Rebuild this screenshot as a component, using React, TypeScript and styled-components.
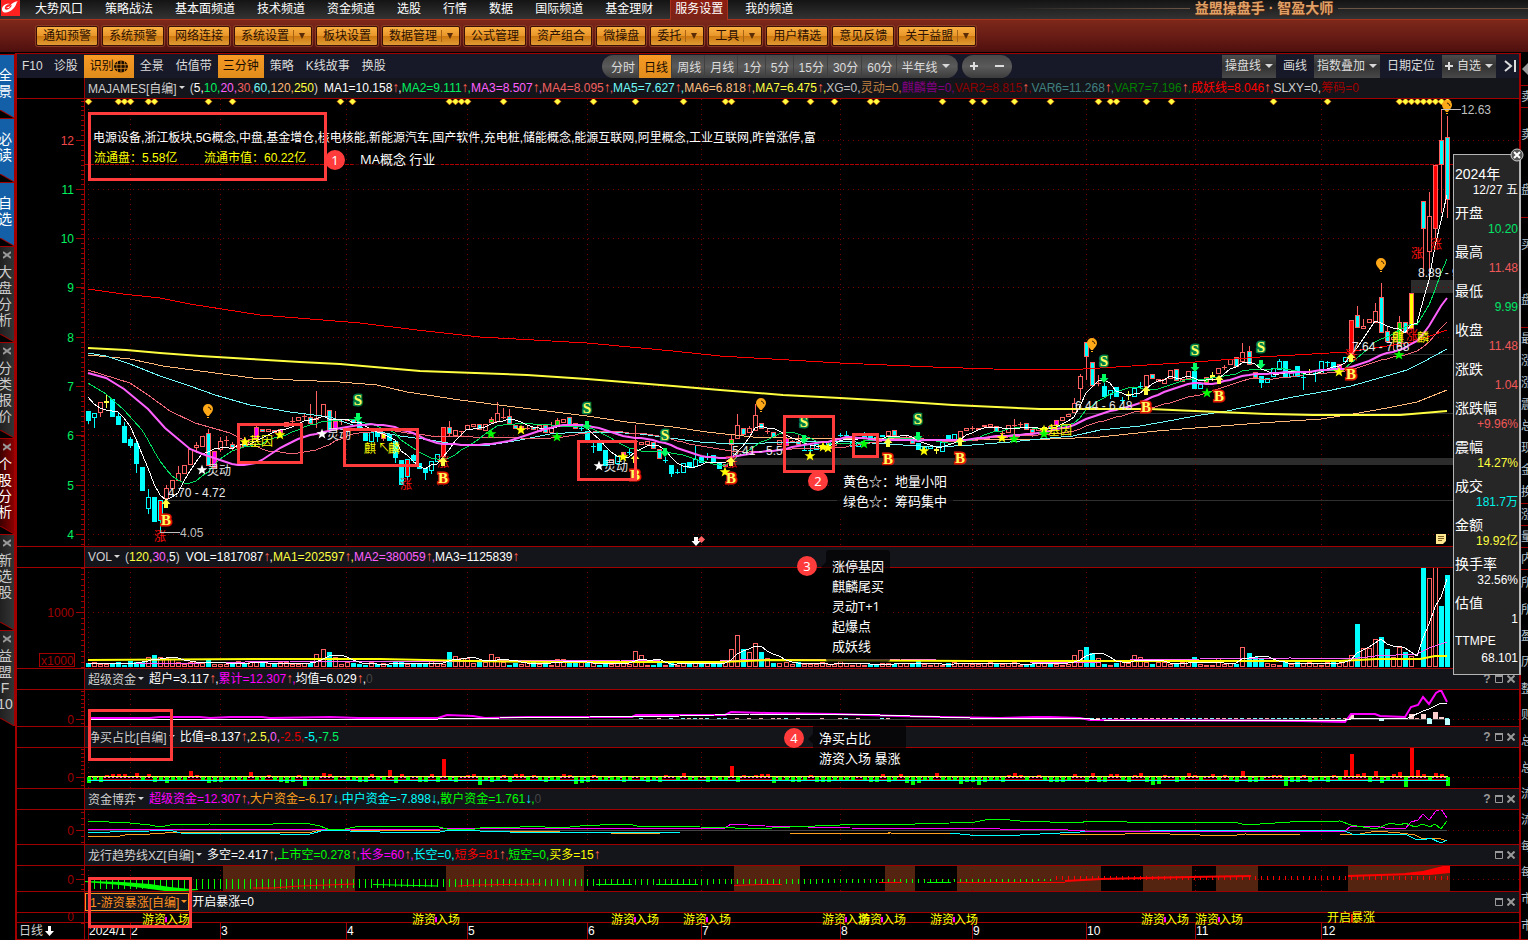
import React from "react";
import styled, { createGlobalStyle, css } from "styled-components";

const RED = "#a00000";
const FONT = '"Liberation Sans", "Noto Sans CJK SC", sans-serif';

const GlobalStyle = createGlobalStyle`
  * { box-sizing: border-box; }
  body { margin: 0; background: #000; font-family: ${FONT}; font-size: 12px; color: #fff; overflow-x: hidden; }
  button { font-family: inherit; font-size: inherit; color: inherit; background: none; border: 0; padding: 0; margin: 0; white-space: nowrap; cursor: pointer; }
`;

/* ---------- shell ---------- */

const Page = styled.div`
  position: relative;
  display: flex;
  flex-direction: column;
  min-height: 100vh;
  overflow: hidden;
`;

const NavBar = styled.nav`
  display: flex;
  height: 20px;
  align-items: stretch;
  background: linear-gradient(#141414, #333);
  border-bottom: 1px solid #a8321c;
`;

const Logo = styled.div`
  width: 24px;
  height: 16px;
`;

const NavItem = styled.a<{ $active?: boolean }>`
  padding: 0 11px;
  height: 19px;
  line-height: 18px;
  color: #fff;
  text-decoration: none;
  white-space: nowrap;
  ${(p) =>
    p.$active &&
    css`
      height: 20px;
      margin: 0 6px;
      padding: 0 4px;
      background: linear-gradient(#8c1c10, #7a2418);
      border: solid #a8321c;
      border-width: 0 1px;
    `}
`;

const BrandRow = styled.div`
  flex: 1;
  display: flex;
  align-items: center;
  margin-left: 200px;
  padding-bottom: 3px;
`;

const BrandLine = styled.span<{ $tail?: boolean }>`
  flex: ${(p) => (p.$tail ? "0 0 190px" : "1")};
  height: 1px;
  background: ${(p) => (p.$tail ? "#6b5546" : "linear-gradient(90deg, transparent, #6b5546)")};
`;

const Brand = styled.strong`
  width: 148px;
  text-align: center;
  font-size: 14px;
  line-height: 16px;
  color: #e0a066;
  text-shadow: 0 1px 1px #5a2a10;
  white-space: nowrap;
`;

const Ribbon = styled.div`
  display: flex;
  gap: 4px;
  height: 32px;
  padding: 6px 36px;
  background: linear-gradient(#7e281a, #641a14 60%, #4e0f0e);
`;

const RibbonButton = styled.button`
  display: flex;
  align-items: center;
  height: 20px;
  padding: 0 6px;
  border: 1px solid #3a1006;
  border-radius: 2px;
  background: linear-gradient(#fbb040, #e8962a 50%, #cf7a10 52%, #e09a34);
  color: #2c1002;
  box-shadow: 0 0 0 1px #8c3c24;
  line-height: 18px;
`;

const RibbonDrop = styled.span`
  display: flex;
  justify-content: flex-end;
  align-items: center;
  width: 12px;
  height: 12px;
  margin: 0 0 0 4px;
  border-left: 1px solid #a86414;
`;

const Caret = styled.span<{ $color?: string; $size?: number; $tall?: boolean }>`
  display: inline-block;
  flex: none;
  border: ${(p) => p.$size ?? 3}px solid transparent;
  border-bottom: 0;
  border-top-color: ${(p) => p.$color ?? "#d8d8d8"};
  ${(p) => p.$tall && "border-top-width: 6px;"}
`;

const Workspace = styled.div`
  flex: 1;
  display: flex;
  border-top: 1px solid #000;
`;

/* ---------- side strips ---------- */

const TabStrip = styled.aside`
  width: 15px;
  flex: none;
  padding-top: 1px;
`;

const tabColors = {
  blue: "#1460a8",
  gray: "linear-gradient(90deg, #202020, #343434)",
  red: "linear-gradient(90deg, #3c0000, #8a0000)",
};

const SideTab = styled.button<{ $tone: keyof typeof tabColors }>`
  position: relative;
  display: flex;
  flex-direction: column;
  align-items: center;
  width: 15px;
  height: ${(p) => (p.$tone === "blue" ? 64 : 96)}px;
  padding: ${(p) => (p.$tone === "blue" ? 12 : 4)}px 4px 0 0;
  overflow: hidden;
  border: solid ${RED};
  border-width: 1px 1px 0 0;
  background: ${(p) => tabColors[p.$tone]};
  color: ${(p) => (p.$tone === "gray" ? "#ccc" : "#fff")};
  font-size: 14px;
  line-height: 16px;
  &::after {
    content: "";
    position: absolute;
    left: 0;
    right: 0;
    bottom: 0;
    height: 8px;
    background: linear-gradient(to top right, #000 44%, ${RED} 50%, transparent 58%);
  }
`;

const TabClose = styled.svg`
  flex: none;
  width: 8px;
  height: 8px;
  margin: 0 0 5px 4px;
`;

const QuoteStrip = styled.aside`
  width: 9px;
  flex: none;
  display: flex;
  flex-direction: column;
  border-left: 2px solid ${RED};
  overflow: hidden;
  color: #b8c4cc;
`;

const QuoteGroup = styled.div<{ $h?: number }>`
  ${(p) => (p.$h ? `flex: none; height: ${p.$h}px;` : "flex: 1;")}
  display: flex;
  flex-direction: column;
  justify-content: space-around;
  border-bottom: 1px solid ${RED};
  line-height: 16px;
  white-space: nowrap;
`;

/* ---------- toolbar ---------- */

const Center = styled.main`
  flex: 1;
  min-width: 0;
  display: flex;
  flex-direction: column;
  border: solid ${RED};
  border-width: 1px 0 0 2px;
`;

const Toolbar = styled.div`
  display: flex;
  justify-content: space-between;
  align-items: center;
  height: 24px;
  background: #171929;
  color: #dcdcdc;
`;

const ToolGroup = styled.div<{ $gap?: number }>`
  display: flex;
  align-items: center;
  gap: ${(p) => p.$gap ?? 0}px;
  height: 23px;
`;

const ToolButton = styled.button<{ $on?: boolean; $boxed?: boolean; $pad?: number }>`
  display: flex;
  align-items: center;
  height: 23px;
  line-height: 16px;
  padding: 0 ${(p) => p.$pad ?? 6}px;
  ${(p) =>
    p.$on &&
    css`
      background: linear-gradient(#f89a24, #e08c1c);
      color: #180c00;
    `}
  ${(p) =>
    p.$boxed &&
    css`
      background: linear-gradient(#4c4c4c, #333 50%, #484848);
      padding: 0 3px;
      gap: 4px;
    `}
`;

const CollapseButton = styled(ToolButton)`
  padding: 0 2px 0 8px;
`;

const Pill = styled.div`
  display: flex;
  height: 23px;
  border-radius: 12px;
  overflow: hidden;
  background: linear-gradient(#484848, #5a5a5a 50%, #3c3c3c);
`;

const PillButton = styled.button<{ $on?: boolean; $edge?: "start" | "end" }>`
  display: flex;
  align-items: center;
  gap: 4px;
  padding: 0 ${(p) => (p.$edge === "end" ? 8 : 4)}px 0 ${(p) => (p.$edge === "start" ? 9 : 5)}px;
  box-shadow: inset -1px 0 #404040;
  ${(p) =>
    p.$on &&
    css`
      background: linear-gradient(#f89a24, #e08c1c);
      color: #180c00;
    `}
`;

const ZoomButton = styled.button`
  display: flex;
  align-items: center;
  justify-content: center;
  width: 25px;
`;

/* ---------- panels ---------- */

const PanelHead = styled.div`
  display: flex;
  align-items: center;
  height: 21px;
  margin-left: 67px;
  padding: 0 4px 2px 3px;
  border-left: 1px solid ${RED};
  background: #14151a;
  box-shadow: inset 0 -1px ${RED};
  white-space: nowrap;
  overflow: hidden;
`;

const HeadRow = styled.div`
  box-shadow: inset 0 -1px ${RED};
`;

const NameButton = styled.button<{ $hot?: boolean }>`
  display: flex;
  align-items: center;
  gap: 2px;
  height: 18px;
  margin-right: ${(p) => (p.$hot ? 3 : 5)}px;
  color: #d0d0d0;
  ${(p) =>
    p.$hot &&
    css`
      margin-left: -3px;
      padding: 0 1px 0 4px;
      border: 1px solid #ff9020;
      color: #ff9020;
    `}
`;

const Readout = styled.span<{ $c: string }>`
  color: ${(p) => p.$c};
  line-height: 18px;
`;

const Trend = styled.span<{ $up: boolean }>`
  display: inline-block;
  width: 6px;
  font-size: 14px;
  font-weight: bold;
  line-height: 14px;
  color: ${(p) => (p.$up ? "#ff6050" : "#00e8ff")};
`;

const Params = styled.span`
  margin-right: 6px;
`;

const HeadTools = styled.span`
  display: flex;
  align-items: center;
  gap: 4px;
  margin-left: auto;
  color: #999;
`;

const IconButton = styled.button`
  width: 8px;
  height: 12px;
  font-size: 12px;
  font-weight: bold;
  line-height: 12px;
  & svg { display: block; margin: 2px 0; }
`;

const Plot = styled.svg<{ $h: number; $over?: boolean }>`
  display: block;
  width: 100%;
  height: ${(p) => p.$h}px;
  border-bottom: 1px solid ${RED};
  ${(p) => p.$over && "position: relative; overflow: visible; z-index: 1;"}
  & text { font-size: 12px; }
`;

/* ---------- overlays ---------- */

const DataCard = styled.section`
  position: absolute;
  top: 154px;
  right: 7px;
  width: 68px;
  padding: 11px 1px 8px;
  border: solid #b4b4b4;
  border-width: 1px 2px 1px 1px;
  background: #262626;
  & dl { margin: 0; }
  & div:last-child dd { margin: 0; }
`;

const CardLabel = styled.dt<{ $latin: boolean }>`
  height: 16px;
  font-size: ${(p) => (p.$latin ? 12 : 14)}px;
  line-height: ${(p) => (p.$latin ? 14 : 16)}px;
  white-space: nowrap;
`;

const CardValue = styled.dd<{ $c: string }>`
  height: 16px;
  margin: 0 0 7px;
  line-height: 16px;
  text-align: right;
  white-space: nowrap;
  color: ${(p) => p.$c};
`;

const CardClose = styled.button`
  position: absolute;
  top: -7px;
  right: -5px;
  width: 14px;
  height: 14px;
  & svg { display: block; }
`;

const Frame = styled.div<{ $x: number; $y: number; $w: number; $h: number }>`
  position: absolute;
  z-index: 2;
  left: ${(p) => p.$x}px;
  top: ${(p) => p.$y}px;
  width: ${(p) => p.$w}px;
  height: ${(p) => p.$h}px;
  border: 3px solid #ff3b3b;
  pointer-events: none;
`;

const Badge = styled.div<{ $x: number; $y: number }>`
  position: absolute;
  z-index: 2;
  left: ${(p) => p.$x}px;
  top: ${(p) => p.$y}px;
  width: 20px;
  height: 20px;
  border-radius: 50%;
  background: #ff3b3b;
  font: 13px/20px "Noto Sans", sans-serif;
  text-align: center;
`;

const Note = styled.div<{ $x: number; $y: number }>`
  position: absolute;
  z-index: 2;
  left: ${(p) => p.$x}px;
  top: ${(p) => p.$y}px;
  padding: 6px;
  border-radius: 3px;
  background: rgba(0, 0, 0, 0.65);
  font: 13px/20px "Open Sans", "Noto Sans CJK SC", sans-serif;
  white-space: pre;
  &::before {
    content: "";
    position: absolute;
    left: -5px;
    top: 12px;
    border: 5px solid transparent;
    border-left: 0;
    border-right-color: rgba(0, 0, 0, 0.65);
  }
`;

/* ---------- data ---------- */

const navItems = "大势风口 策略战法 基本面频道 技术频道 资金频道 选股 行情 数据 国际频道 基金理财 服务设置 我的频道".split(" ");
const ribbon = "通知预警 系统预警 网络连接 系统设置▾ 板块设置 数据管理▾ 公式管理 资产组合 微操盘 委托▾ 工具▾ 用户精选 意见反馈 关于益盟▾".split(" ");
const periods = "分时 日线 周线 月线 1分 5分 15分 30分 60分 半年线".split(" ");

const sideTabs: { tone: keyof typeof tabColors; chars: string[] }[] = [
  { tone: "blue", chars: ["全", "景"] },
  { tone: "blue", chars: ["必", "读"] },
  { tone: "blue", chars: ["自", "选"] },
  { tone: "gray", chars: ["大", "盘", "分", "析"] },
  { tone: "gray", chars: ["分", "类", "报", "价"] },
  { tone: "red", chars: ["个", "股", "分", "析"] },
  { tone: "gray", chars: ["新", "选", "股"] },
  { tone: "gray", chars: ["益", "盟", "F", "10"] },
];

const quoteGroups: { h?: number; text: string }[] = [
  { h: 22, text: "卖" },
  { h: 110, text: "卖盘" },
  { h: 110, text: "买盘" },
  { h: 176, text: "最涨涨震总现金换" },
  { h: 22, text: "涨" },
  { h: 22, text: "量" },
  { h: 22, text: "内" },
  { text: "所所盈历整则总总流流每每市市" },
];

// One entry per session: kind, body top, body bottom, optional high and low.
// u rise, d/c fall, h soft rise, R limit-up, m/g/y tagged, x/X doji
const sessions = `d411,421,411,424 h413,418,413,428 u402,413,402,417 y401,403,395,408 d399,417 d416,425,413 d426,443,422 d439,446,437,448 d443,464,442,473 d467,491 h497,509,489,514 d497,522 r500,521,500,532 u488,499,485 u480,489 u473,481,466 u465,474 u449,465 u445,448,442,453 u436,447
c433,466,429 m451,468 u441,450,437,452 x440,441,436,446 c444,448,442,450 u445,448 c441,447,437 u439,445 m427,439,426 c429,432 u429,432 c430,433 m429,433 u422,427 x421,422,417,426 u417,421 x416,417,413,421 c417,424,404 x418,420,391,428 u404,417
c410,431 m421,430,411 x421,422,419,425 u419,421 c419,423 d421,428 d432,441 h432,442 d431,437,431,442 Y433,439,433,441 d434,441 d441,458,441,463 d460,485 r459,477,459,480 d455,461,454,463 d463,469 d468,473,468,480 h461,471,461,474 h454,462 R427,457
c427,434,421,436 u430,436 x431,432,431,436 u425,430 u424,427 c424,430 u424,431 g419,423,417 u413,422,402 x417,418,408,419 c416,424,409 c425,429 m426,429 x428,429,426,430 c427,430 u425,432 c425,433 u427,433,422 g420,427,418 u419,423
c417,425 c423,429 X428,429,427,431 d431,440 X446,447,443,453 d443,451 d450,466 u459,463 h456,464 m452,455 X452,453,449,455 x441,442,425,477 u442,445 u441,445 c442,449 c449,459 X460,461,457,463 d465,474,465,477 X472,473,469,474 h463,473
d462,468 h459,467,446 d457,463 X457,458,453,460 d455,463 d463,469 m464,467 g439,445,435,460 u425,439,414 c428,435 u428,433,426 u415,431,404 c423,429 x431,432,428,434 c432,438 u440,445 m438,446 x441,442,440,443 c441,445,435 X450,451,438,451
X450,451,446,454 h444,450 y445,448 h441,445 u440,446 X435,436,433,437 X435,436,431,439 h442,447 h443,447 h436,439,432 d436,440 d437,440 h435,437 u431,436 c430,436 u437,439 x437,438,436,441 c437,444 d443,450 h447,451
h446,449 y449,451,447,454 h442,452 d435,442 h434,442 u431,440 u428,431 x428,429,426,431 u428,430 u425,427 u424,427 c426,432 x433,434,431,436 u425,433 x425,426,419,436 x424,425,422,427 c423,430 c429,433,429,437 u428,431 y427,433
c426,429 m420,426 u417,421 u414,417 u403,413,398 u376,389,374,400 c342,357,342,380 c362,386 x383,384,375,386 d386,397,383 h390,395,390,399 d387,397 X400,401,397,404 y394,396,391,400 h388,397 X386,387,382,389 u375,387 c374,379 u379,382 u379,384
u370,379 c369,381 u379,382 u371,379 d371,389 h384,389 g377,383 y375,378,372,381 u368,374 x367,368,365,370 u359,365 c357,367 u352,362,343 c351,365,346 c372,378 d376,383,376,388 h378,383 h368,377 h361,370,359 d361,377
h371,377 d366,377 X377,378,375,390 y371,373,369,374 X373,374,370,382 h361,374 X362,363,361,367 d362,370 m364,370 h357,362 R320,354 c315,328,306 u326,329,319 u319,323 u311,323,303 c297,333,283 c331,342,327 u337,340,335,350 g322,347,316 c322,333 Y293,329 n329,329
c201,229,201,277 u216,252,192,279 R165,229,165,238 c140,165,109,213 c137,200,116,218`
  .split(/\s+/)
  .map((s, i) => {
    const [top, bottom, high, low] = s.slice(1).split(",").map(Number);
    const kind = s[0];
    return {
      kind,
      top,
      bottom,
      high: high || top,
      low: low || bottom,
      close: "dc".includes(kind) ? bottom : top,
      x: Math.round(88 + i * 6.013),
    };
  });

const volumePeaks: Record<number, number> = {
  10: 10, 11: 12, 12: 10, 13: 9, 14: 8, 20: 8, 38: 13, 39: 18, 40: 15, 41: 10, 60: 15, 61: 11, 62: 9, 63: 9, 67: 13, 68: 10, 78: 8, 79: 8,
  91: 16, 92: 12, 107: 18, 108: 32, 109: 18, 110: 15, 111: 24, 112: 15, 113: 9, 164: 12, 165: 17, 166: 20, 167: 14, 168: 9, 174: 12, 175: 10,
  184: 10, 188: 9, 192: 20, 193: 14, 194: 10, 195: 9, 209: 6, 210: 12, 211: 43, 212: 19, 213: 19, 214: 28, 215: 30, 216: 18, 217: 10, 218: 20,
  219: 15, 220: 11, 221: 0, 222: 100, 223: 89, 224: 100, 225: 61, 226: 92,
};
const noise = (i: number) => Math.abs(Math.sin(i * 12.9898 + 4.1) * 43758.5453) % 1;
const volumes = sessions.map((_, i) => volumePeaks[i] ?? 2 + Math.round(noise(i) * 4));

const netPeaks: Record<number, number> = {
  0: -6, 2: -5, 5: 3, 13: -6, 17: 6, 20: -6, 27: 5, 33: -6, 36: -9, 50: 7, 51: -6, 59: 18, 65: -8, 71: 3, 81: -7, 82: -6, 107: 11, 114: -6,
  135: 3, 136: -6, 137: -8, 138: -6, 145: -7, 148: -8, 177: -8, 178: -7, 192: 6, 199: -9, 209: 7, 210: 23, 214: 6, 215: -6, 218: 5, 219: -10,
  220: 30, 221: 7, 224: 4, 225: 3, 226: -9,
};
const netBuy = sessions.map((_, i) => {
  if (netPeaks[i] !== undefined) return netPeaks[i];
  const n = noise(i + 500);
  return n > 0.6 ? 1 + Math.round((n - 0.6) * 7) : -(3 + Math.round(n * 4));
});

function average(values: number[], n: number, from: number, x0: string, map = (v: number) => v) {
  let out = x0;
  for (let i = from; i < values.length; i++) {
    let sum = 0;
    const start = Math.max(0, i - n + 1);
    for (let k = start; k <= i; k++) sum += values[k];
    out += ` ${sessions[i].x},${Math.round(map(sum / (i - start + 1)))}`;
  }
  return out;
}
const closes = sessions.map((s) => s.close);

const lines = {
  red: "88,289 123,294 160,298 190,304 260,315 360,323 417,330 480,337 587,343 673,351 720,356 840,363 933,367 993,369 1067,370 1100,368 1195,362 1260,357 1347,352 1387,346 1413,342 1430,336 1447,330",
  yellow: "88,348 126,350 160,353 200,356 250,359 300,362 340,364 420,371 527,375 587,379 673,386 720,390 783,395 840,398 893,401 953,405 1040,409 1150,409 1195,411 1267,414 1313,415 1400,415 1447,411",
  tan: "88,355 130,359 163,366 200,371 253,378 293,380 340,382 377,385 407,392 460,400 507,406 547,411 587,416 627,422 673,427 707,432 753,437 787,438 920,439 1050,439 1100,437 1157,431 1195,428 1260,423 1321,419 1353,414 1387,408 1417,402 1447,390",
  cyan: "88,353 106,356 130,364 160,376 190,386 215,395 250,405 290,412 330,417 350,424 370,430 400,436 430,440 460,445 490,445 520,440 550,434 580,432 610,432 640,434 670,438 700,442 731,444 800,442 840,441 903,445 937,447 972,445 1010,442 1050,438 1073,436 1100,430 1140,426 1163,422 1195,416 1227,411 1260,404 1293,397 1327,391 1351,386 1383,377 1407,370 1423,362 1447,349",
  white: average(closes, 5, 4, "88,397 94,404 100,408 106,410"),
  green: average(closes, 10, 10, "88,383 106,394 124,410 142,430"),
  magenta: average(closes, 20, 20, "88,373 106,378 124,389 148,409 165,428 190,449 200,453"),
  pink: average(closes, 30, 30, "88,370 130,383 148,395 170,411 195,423 230,433 250,443 262,449"),
};

const months: [number, string][] = [
  [88, "2024/1"], [130, "2"], [220, "3"], [346, "4"], [467, "5"], [587, "6"], [701, "7"], [840, "8"], [972, "9"], [1086, "10"], [1195, "11"], [1321, "12"],
];

const diamonds = [88, 118, 124, 130, 148, 154, 208, 232, 340, 352, 449, 455, 461, 467, 503, 557, 593, 635, 683, 725, 731, 785, 810, 834, 870, 876, 942, 972, 984, 1014, 1050, 1098, 1110, 1116, 1146, 1171, 1273, 1327, 1399, 1405, 1411, 1417, 1423, 1429, 1435, 1441, 1447];

const buys = [[166, 520], [443, 478], [635, 475], [731, 478], [888, 459], [960, 458], [1146, 407], [1219, 396], [1351, 374]];
const sells = [[358, 400], [587, 408], [665, 435], [804, 422], [918, 419], [1104, 361], [1195, 350], [1261, 347]];
const balloons = [[208, 410], [761, 404], [1092, 344], [1381, 264], [1447, 106]];
const yellowStars = [[245, 442], [280, 435], [521, 430], [623, 457], [725, 472], [810, 456], [823, 447], [828, 448], [924, 451], [1002, 438], [1044, 430], [1339, 372]];
const greenStars = [[491, 434], [557, 437], [864, 444], [1014, 439], [1044, 434], [1207, 393], [1399, 355]];
const surges = [[160, 537], [406, 485], [443, 463], [731, 463], [1351, 356], [1417, 254], [1436, 245], [1412, 336]];
const signals = [142, 412, 611, 683, 822, 858, 930, 1141, 1195];

const card: [string, string, string][] = [
  ["2024年", "12/27 五", "#fff"], ["开盘", "10.20", "#00e468"], ["最高", "11.48", "#f05858"], ["最低", "9.99", "#00e468"], ["收盘", "11.48", "#f05858"],
  ["涨跌", "1.04", "#f05858"], ["涨跌幅", "+9.96%", "#f05858"], ["震幅", "14.27%", "#ffff40"], ["成交", "181.7万", "#00f0e8"], ["金额", "19.92亿", "#ffff40"],
  ["换手率", "32.56%", "#fff"], ["估值", "1", "#fff"], ["TTMPE", "68.101", "#fff"],
];

/* ---------- chart parts ---------- */

const STAR = "0,-5.5 1.4,-1.8 5.4,-1.7 2.2,0.7 3.4,4.6 0,2.3 -3.4,4.6 -2.2,0.7 -5.4,-1.7 -1.4,-1.8";

const Star = ({ x, y, fill }: { x: number; y: number; fill: string }) => <polygon points={STAR} transform={`translate(${x} ${y})`} fill={fill} />;

const MarkText = styled.text`
  && {
    font: bold 15px "Liberation Serif", serif;
  }
  text-anchor: middle;
  paint-order: stroke;
  stroke-width: 3px;
`;

const Letter = ({ x, y, ch, fill, edge }: { x: number; y: number; ch: string; fill: string; edge: string }) => (
  <MarkText x={x} y={y + 5} fill={fill} stroke={edge}>{ch}</MarkText>
);

const Arrow = ({ x, y, down, fill }: { x: number; y: number; down?: boolean; fill: string }) => (
  <path d="M0 -5L4.500 0H2V4H-2V0H-4.500Z" transform={`translate(${x} ${y})${down ? " rotate(180)" : ""}`} fill={fill} />
);

const candleStyle: Record<string, [string, string]> = {
  u: ["#ff6060", "#000"], d: ["#00ffff", "#00ffff"], c: ["#ff6060", "#00ffff"], h: ["#00ffff", "#000"], R: ["#ff6060", "#ff0000"], r: ["#00ffff", "#ff0000"],
  m: ["#ff6060", "#ff00ff"], g: ["#ff6060", "#00e000"], y: ["#ffff40", "#ffff40"], Y: ["#ff6060", "#ffff00"], x: ["#ff6060", "#ff6060"], X: ["#00ffff", "#00ffff"],
};

const Candles = () => (
  <g shapeRendering="crispEdges">
    {sessions.map((s, i) => {
      if (s.kind === "n") return null;
      const [stroke, fill] = candleStyle[s.kind];
      return (
        <g key={i}>
          <rect x={s.x} y={s.high} width={1} height={Math.max(1, s.low - s.high)} fill={stroke} />
          <rect x={s.x - 2} y={s.top} width={5} height={Math.max(1, s.bottom - s.top)} fill={stroke} />
          {s.bottom - s.top > 2 && <rect x={s.x - 1} y={s.top + 1} width={3} height={s.bottom - s.top - 2} fill={fill} />}
        </g>
      );
    })}
  </g>
);

interface AxisProps {
  top: number;
  bottom: number;
  step: number;
  labels?: [number, string, string?][];
  grid?: boolean;
}

const Axis = ({ top, bottom, step, labels = [], grid = true }: AxisProps) => {
  const ticks: number[] = [];
  const base = labels[0]?.[0] ?? bottom;
  for (let y = base; y > top; y -= step) ticks.push(y);
  for (let y = base + step; y < bottom; y += step) ticks.push(y);
  return (
    <g shapeRendering="crispEdges">
      {grid && months.map(([x]) => <line key={x} x1={x + 0.5} x2={x + 0.5} y1={top} y2={bottom} stroke="#780000" strokeDasharray="1 4" />)}
      <line x1={84.5} x2={84.5} y1={top} y2={bottom} stroke={RED} />
      {ticks.map((y) => <line key={y} x1={81} x2={84} y1={Math.round(y) + 0.5} y2={Math.round(y) + 0.5} stroke={RED} />)}
      {labels.map(([y, t, c]) => (
        <g key={y}>
          {grid && <line x1={88} x2="200%" y1={y + 0.5} y2={y + 0.5} stroke="#780000" strokeDasharray="1 4" />}
          <line x1={76} x2={84} y1={y + 0.5} y2={y + 0.5} stroke={RED} />
          <text x={74} y={y + 5} textAnchor="end" fill={c ?? RED}>{t}</text>
        </g>
      ))}
    </g>
  );
};

const Line = ({ points, color, w = 1 }: { points: string; color: string; w?: number }) => (
  <polyline points={points} fill="none" stroke={color} strokeWidth={w} shapeRendering={w > 1 ? "auto" : "crispEdges"} />
);

const CloseGlyph = () => (
  <svg width="8" height="8" viewBox="0 0 8 8"><path d="M0.500 0.500L7.500 7.500M7.500 0.500L0.500 7.500" stroke="#999" strokeWidth="2" /></svg>
);

interface HeadProps {
  name: string;
  hot?: boolean;
  params?: [string, string][];
  values: [string, string, ("up" | "down")?][];
  tools?: "full" | "short";
}

const Head = ({ name, hot, params, values, tools }: HeadProps) => (
  <HeadRow>
    <PanelHead>
      <NameButton $hot={hot}>{name}<Caret $color={hot ? "#ff9020" : undefined} /></NameButton>
      {params && (
        <Params>
          <Readout $c="#d0d0d0">(</Readout>
          {params.map(([t, c], i) => <Readout key={i} $c={c}>{t}{i < params.length - 1 ? "," : ""}</Readout>)}
          <Readout $c="#d0d0d0">)</Readout>
        </Params>
      )}
      {values.map(([t, c, dir], i) => (
        <Readout key={i} $c={c}>
          {t}
          {dir && <Trend $up={dir === "up"}>{dir === "up" ? "↑" : "↓"}</Trend>}
          {i < values.length - 1 ? "," : ""}
        </Readout>
      ))}
      {tools && (
        <HeadTools>
          {tools === "full" && <IconButton aria-label="帮助">?</IconButton>}
          <IconButton aria-label="最大化"><svg width="8" height="8" viewBox="0 0 8 8"><path d="M0.500 1H7.500V7.500H0.500Z" fill="none" stroke="#999" /><path d="M0 1H8" stroke="#999" strokeWidth="2" /></svg></IconButton>
          <IconButton aria-label="关闭"><CloseGlyph /></IconButton>
        </HeadTools>
      )}
    </PanelHead>
  </HeadRow>
);

/* Plots share one horizontal scale that starts 17px in, so each is shifted by its own top. */
const Shift = ({ y, children }: { y: number; children: React.ReactNode }) => <g transform={`translate(-17 ${-y})`}>{children}</g>;

const priceTicks: [number, string, string][] = [
  [534, "4", "#00f060"], [485, "5", "#00f060"], [435, "6", "#00f060"], [386, "7", "#00f060"], [337, "8", "#00f060"], [287, "9", "#00f060"],
  [238, "10", "#00f060"], [189, "11", "#00f060"], [140, "12", "#f04848"],
];

const PricePlot = () => (
  <Plot $h={448}>
    <Shift y={99}>
      <g shapeRendering="crispEdges">
        <rect x={733} y={458} width={2000} height={7} fill="#2c2c2c" />
        <rect x={1411} y={280} width={2000} height={13} fill="#2c2c2c" />
        <path d="M166 500.500H3000M1068 413.500H3000M1351 354.500H3000" stroke="#303030" />
      </g>
      <Axis top={99} bottom={546} step={4.925} labels={priceTicks} />
      <line x1={85} x2={3000} y1={164.5} y2={164.5} stroke="#b00000" strokeDasharray="4 1" shapeRendering="crispEdges" />
      <Candles />
      <Line points={lines.red} color="#ff0000" />
      <Line points={lines.tan} color="#ffb878" />
      <Line points={lines.cyan} color="#70f8f8" />
      <Line points={lines.pink} color="#f06878" />
      <Line points={lines.green} color="#00e060" />
      <Line points={lines.white} color="#ffffff" />
      <Line points={lines.magenta} color="#ff60ff" w={2} />
      <Line points={lines.yellow} color="#ffff40" w={2} />
      {diamonds.map((x) => <path key={x} d={`M${x + 0.5} 98l3.500 3.500l-3.500 3.500l-3.500 -3.500Z`} fill="#ffff40" stroke="#e04000" strokeWidth="0.500" />)}
      {surges.map(([x, y], i) => <text key={i} x={x} y={y + 4} textAnchor="middle" fill="#ff1010">涨</text>)}
      {buys.map(([x, y], i) => <Letter key={i} x={x} y={y} ch="B" fill="#ffff60" edge="#e01800" />)}
      {buys.map(([x, y], i) => <Arrow key={i} x={x} y={y - 16} fill="#ffff40" />)}
      {sells.map(([x, y], i) => <Letter key={i} x={x} y={y} ch="S" fill="#ffff60" edge="#008048" />)}
      {sells.map(([x, y], i) => <Arrow key={i} x={x} y={y + 17} down fill="#00ff60" />)}
      {balloons.map(([x, y], i) => (
        <g key={i} fill="#ffa818">
          <path d={`M${x} ${y - 6}a5 5 0 0 1 5 5c0 3 -3 5 -4 7h-2c-1 -2 -4 -4 -4 -7a5 5 0 0 1 5 -5Z`} />
          <rect x={x - 1} y={y + 7} width={2} height={1} />
          <path d={`M${x} ${y - 3}q2 0 3 3`} stroke="#3a2000" fill="none" />
        </g>
      ))}
      {yellowStars.map(([x, y], i) => <Star key={i} x={x} y={y} fill="#ffff00" />)}
      {greenStars.map(([x, y], i) => <Star key={i} x={x} y={y} fill="#00ff00" />)}
      {[[197, 470], [317, 434], [594, 466]].map(([x, y], i) => (
        <g key={i}>
          <Star x={x + 5} y={y} fill="#fff" />
          <text x={x + 10} y={y + 5} fill="#e8e8e8">灵动</text>
        </g>
      ))}
      <g fill="#ffff00">
        <text x={249} y={446}>基因</text>
        <text x={1048} y={435}>基因</text>
        <text x={364} y={453}>麒</text>
        <text x={378} y={452}>↖</text>
        <text x={388} y={453}>麟</text>
        <text x={1392} y={342}>麒</text>
        <text x={1417} y={342}>麟</text>
      </g>
      <g fill="#e8e8e8">
        <text x={168} y={497}>4.70 - 4.72</text>
        <text x={732} y={455}>5.41 - 5.5</text>
        <text x={1075} y={410}>6.44 - 6.48</text>
        <text x={1352} y={351}>7.64 - 7.68</text>
        <text x={1418} y={277}>8.89 - 9.</text>
      </g>
      <g fill="#c0c0c0">
        <text x={1461} y={114}>12.63</text>
        <text x={180} y={537}>4.05</text>
        <path d="M1441 109.500H1461M160 532.500H180" stroke="#c0c0c0" />
      </g>
      <text x={93} y={142} fill="#fff">电源设备,浙江板块,5G概念,中盘,基金增仓,核电核能,新能源汽车,国产软件,充电桩,储能概念,能源互联网,阿里概念,工业互联网,昨曾涨停,富</text>
      <text x={94} y={162} fill="#ffff00">流通盘：5.58亿</text>
      <text x={204} y={162} fill="#ffff00">流通市值：60.22亿</text>
      <Arrow x={696} y={541} down fill="#fff" />
      <path d="M701.500 536l3.500 3.500l-3.500 3.500l-3.500 -3.500Z" fill="#ff6060" />
      <path d="M1436 534H1446V541L1443 544H1436Z" fill="#ffe890" />
      <path d="M1438 536.500H1444M1438 538.500H1444M1438 540.500H1442" stroke="#806020" strokeWidth="1" />
    </Shift>
  </Plot>
);

const VolumePlot = () => (
  <Plot $h={101}>
    <Shift y={568}>
      <Axis top={567} bottom={668} step={5.5} labels={[[612, "1000"]]} />
      <rect x={39.5} y={653.5} width={35} height={13} fill="none" stroke={RED} />
      <text x={41} y={665} fill={RED}>x1000</text>
      <g shapeRendering="crispEdges">
        {sessions.map((s, i) => {
          const v = volumes[i];
          if (!v) return null;
          return s.close === s.bottom && s.kind !== "x" ? (
            <rect key={i} x={s.x - 2} y={667 - v} width={5} height={v} fill="#00ffff" />
          ) : (
            <rect key={i} x={s.x - 1.5} y={667.5 - v} width={4} height={v - 1} fill="none" stroke="#ff6060" />
          );
        })}
      </g>
      <Line points="88,664 200,663 290,661 350,661 440,662 467,661 560,660 620,660 700,662 760,659 900,659 972,661 1087,663 1130,660 1200,659 1290,658 1350,659 1375,656 1417,654 1429,648 1447,642" color="#ff60ff" />
      <Line points="88,660 257,659 380,659 470,661 560,662 720,662 770,660 972,661 1100,661 1340,661 1376,659 1420,659 1435,656 1447,656" color="#ffff00" w={2} />
      <Line points={average(volumes, 5, 0, "", (v) => 667 - v)} color="#ffffff" />
    </Shift>
  </Plot>
);

const SuperFundPlot = () => (
  <Plot $h={37}>
    <Shift y={690}>
      <Axis top={689} bottom={726} step={4} labels={[[719, "0"]]} />
      <g shapeRendering="crispEdges">
        <line x1={88} x2={1447} y1={719.5} y2={719.5} stroke="#444" />
        {sessions.map((s, i) => ((i > 90 && i < 135 && noise(i) > 0.4) || i > 165 ? <rect key={i} x={s.x - 2} y={718} width={4} height={1} fill={noise(i + 9) > 0.4 ? "#80ffff" : "#ffb0b0"} /> : null))}
        {[[1351, 715, 4], [1411, 714, 5], [1423, 714, 5], [1435, 712, 7], [1441, 717, 2]].map(([x, y, h]) => <rect key={x} x={x - 2} y={y} width={5} height={h} fill="#ffd0d0" />)}
        {[[1381, 719, 2], [1429, 719, 5], [1447, 719, 6]].map(([x, y, h]) => <rect key={x} x={x - 2} y={y} width={5} height={h} fill="#c0ffff" />)}
      </g>
      <Line w={2} color="#ff00ff" points="88,718 150,718 160,717 200,717 210,718 230,717 262,717 270,718 330,717 358,718 438,718 447,715 473,716 485,718 528,717 632,717 636,715 725,715 731,712 767,713 834,714 900,716 940,717 1000,718 1035,717 1050,717 1080,718 1090,720 1300,721 1345,722 1351,714 1375,714 1380,716 1405,717 1411,707 1418,705 1423,697 1429,704 1436,693 1441,690 1447,702" />
      <Line color="#ffffff" points="88,719 438,719 500,718 680,716 750,714 850,714 970,718 1018,718 1080,718 1100,720 1340,721 1351,719 1380,718 1408,718 1423,711 1429,709 1441,703 1447,703" />
    </Shift>
  </Plot>
);

const NetBuyPlot = () => (
  <Plot $h={41}>
    <Shift y={748}>
      <Axis top={747} bottom={788} step={4} labels={[[777, "0"]]} />
      <g shapeRendering="crispEdges">
        <path d="M88 777.500H1448" stroke="#ff60ff" strokeDasharray="2 2" />
        <path d="M88 779.500H1448" stroke="#c00000" />
        {sessions.map((s, i) => {
          const v = netBuy[i];
          return <rect key={i} x={s.x - 1} y={v > 0 ? 777 - v : 777} width={4} height={Math.abs(v)} fill={v > 0 ? "#ff0000" : "#00ff00"} />;
        })}
        <path d="M88 776.500H1448" stroke="#ffff40" />
        <path d="M88 780.500H1448" stroke="#00ffff" />
      </g>
    </Shift>
  </Plot>
);

const FundGamePlot = () => (
  <Plot $h={35}>
    <Shift y={810}>
      <Axis top={809} bottom={844} step={6} labels={[[830, "0"]]} />
      <path d="M88 830.500H1447" stroke="#444" />
      <Line color="#ffa020" points="88,836 120,836 125,835 150,834 165,833 300,832 312,832 325,829 350,830 440,831 510,831 660,834 790,834 890,833 960,834 1060,834 1110,835 1140,833 1230,836 1245,834 1300,835 1340,835 1360,834 1376,831 1400,833 1415,835 1423,839 1432,838 1441,839 1447,841" />
      <Line color="#00ffff" points="88,832 110,832 150,831 170,830 180,833 280,834 310,834 325,830 350,831 380,832 440,832 450,830 510,832 590,832 680,833 950,833 970,835 1000,836 1080,832 1150,831 1250,830 1345,831 1352,834 1390,835 1405,834 1415,839 1423,840 1430,838 1441,843 1447,840" />
      <Line color="#ff00ff" points="88,829 440,829 447,828 725,828 731,824 765,826 850,828 1000,829 1050,829 1085,831 1345,831 1351,826 1375,826 1385,828 1405,829 1411,822 1418,820 1423,814 1429,820 1436,811 1441,809 1447,818" />
      <Line color="#00ff00" points="88,821 130,823 150,825 160,827 170,825 210,824 220,825 235,824 262,825 285,823 310,824 320,826 330,830 345,829 360,826 435,826 447,829 470,830 485,827 510,828 530,826 560,828 580,826 600,825 630,824 640,827 670,826 700,827 735,828 755,829 790,827 840,825 870,824 890,825 915,824 950,823 975,822 985,820 1000,819 1020,821 1080,823 1087,821 1120,821 1134,823 1160,822 1235,822 1245,825 1290,822 1340,821 1351,825 1376,829 1390,823 1400,825 1405,823 1415,827 1423,824 1430,827 1435,824 1441,829 1447,821" />
    </Shift>
  </Plot>
);

const TrendPlot = () => (
  <Plot $h={26}>
    <Shift y={866}>
      <g fill="#542410">
        {[[223, 355], [446, 584], [734, 800], [885, 915], [957, 1101], [1143, 1192], [1216, 1258], [1348, 1450]].map(([a, b]) => <rect key={a} x={a} y={866} width={b - a} height={26} />)}
      </g>
      <Axis top={865} bottom={891} step={5} labels={[[879, "0"]]} />
      <g shapeRendering="crispEdges">
        {sessions.map((s, i) => {
          if (i < 161) return <rect key={i} x={s.x} y={879} width={1} height={Math.round(i < 40 ? 10 : 9 - (i - 40) / 18)} fill="#00ff00" />;
          return <rect key={i} x={s.x} y={876} width={1} height={4} fill="#ff0000" />;
        })}
      </g>
      <polygon points="85,881 122,882 150,884 170,887 190,889 198,889 198,890 185,891 165,891 150,889 120,885 85,882" fill="#00ff00" />
      <path d="M373 884.500L395 885L438 886M596 884.500H632M656 884.500H698M927 882.500H951" stroke="#00ff00" fill="none" />
      <path d="M253 888L272 888L300 886L355 884M458 886L475 885L541 884M734 885.500L760 884.500H782M879 882.500H902M957 882.500H1065" stroke="#ff0000" fill="none" />
      <path d="M1065 881L1101 879L1145 878L1190 877L1251 876M1348 876L1411 874" stroke="#ff0000" strokeWidth={2} fill="none" />
      <polygon points="1405,873 1423,871 1447,865 1450,865 1450,873 1430,875 1405,875" fill="#ff0000" />
    </Shift>
  </Plot>
);

const SignalPlot = () => (
  <Plot $h={10} $over>
    <Shift y={913}>
      <Axis top={912} bottom={923} step={20} grid={false} />
      <text x={74} y={921} textAnchor="end" fill={RED}>0</text>
      {signals.map((x) => (
        <g key={x}>
          <text x={x} y={924} fill="#ffff00">游资入场</text>
          <rect x={x + 23} y={917} width={2} height={5} fill="#ff00ff" />
        </g>
      ))}
      <text x={1327} y={922} fill="#ffff00">开启暴涨</text>
      <rect x={1351} y={914} width={2} height={8} fill="#ff3000" />
    </Shift>
  </Plot>
);

const DatePlot = () => (
  <Plot $h={17}>
    <Shift y={923}>
      <text x={19} y={935} fill="#d0d0d0">日线</text>
      <path d="M48 926H51V931H54L49.500 936L45 931H48Z" fill="#fff" />
      <path d="M84.500 923V940" stroke={RED} />
      {months.map(([x, t]) => (
        <g key={x}>
          <path d={`M${x + 0.5} 923V940`} stroke={RED} />
          <text x={x + 1} y={935} fill="#fff">{t}</text>
        </g>
      ))}
    </Shift>
  </Plot>
);

const Globe = () => (
  <svg width="14" height="13" viewBox="0 0 15 13">
    <ellipse cx="7.500" cy="6.500" rx="7.500" ry="6.300" fill="#180c00" />
    <path d="M0 4.500H15M0 8.500H15M7.500 0V13M4 0.500Q2 6.500 4 12.500M11 0.500Q13 6.500 11 12.500" stroke="#ee9420" strokeWidth="0.800" fill="none" />
  </svg>
);

export default function App() {
  return (
    <Page>
      <GlobalStyle />
      <NavBar>
        <Logo>
          <svg width="20" height="16" viewBox="0 0 20 16">
            <path d="M1 0H20V16H1Z" fill="#ff2020" />
            <path d="M18 1C16 2 17 5 13 9C9 13 3 14 2 10C1.500 6 6 3 10 4C7 4 4 7 5 9C7 11 11 8 12 5L10 6C12 3 14 2 18 1Z" fill="#fff" />
            <path d="M6 8L10 6L9 8Z" fill="#fff" />
          </svg>
        </Logo>
        {navItems.map((t) => <NavItem key={t} href="#" $active={t === "服务设置"}>{t}</NavItem>)}
        <BrandRow>
          <BrandLine />
          <Brand>益盟操盘手 · 智盈大师</Brand>
          <BrandLine $tail />
        </BrandRow>
      </NavBar>
      <Ribbon>
        {ribbon.map((t) => (
          <RibbonButton key={t}>
            {t.replace("▾", "")}
            {t.endsWith("▾") && <RibbonDrop><Caret $color="#5a2c08" $tall /></RibbonDrop>}
          </RibbonButton>
        ))}
      </Ribbon>
      <Workspace>
        <TabStrip>
          {sideTabs.map((tab, i) => (
            <SideTab key={i} $tone={tab.tone}>
              {tab.tone !== "blue" && <TabClose viewBox="0 0 8 8"><path d="M0 1L8 7M8 1L0 7" stroke="#999" strokeWidth="2" /></TabClose>}
              {tab.chars.map((c, k) => <span key={k}>{c}</span>)}
            </SideTab>
          ))}
        </TabStrip>
        <Center>
          <Toolbar>
            <ToolGroup>
              <ToolButton $pad={5}>F10</ToolButton>
              <ToolButton>诊股</ToolButton>
              <ToolButton $on>识别<Globe /></ToolButton>
              <ToolButton>全景</ToolButton>
              <ToolButton>估值带</ToolButton>
              <ToolButton $on $pad={5}>三分钟</ToolButton>
              <ToolButton>策略</ToolButton>
              <ToolButton>K线故事</ToolButton>
              <ToolButton>换股</ToolButton>
            </ToolGroup>
            <ToolGroup $gap={4}>
              <Pill>
                {periods.map((t, i) => (
                  <PillButton key={t} $on={i === 1} $edge={i === 0 ? "start" : i === 9 ? "end" : undefined}>
                    {t}
                    {i === 9 && <Caret $size={4} />}
                  </PillButton>
                ))}
              </Pill>
              <Pill>
                <ZoomButton aria-label="放大"><svg width="8" height="8" viewBox="0 0 8 8"><path d="M0 4H8M4 0V8" stroke="#ddd" strokeWidth="2" /></svg></ZoomButton>
                <ZoomButton aria-label="缩小"><svg width="9" height="8" viewBox="0 0 9 8"><path d="M0 4H9" stroke="#ddd" strokeWidth="2" /></svg></ZoomButton>
              </Pill>
            </ToolGroup>
            <ToolGroup>
              <ToolButton $boxed>操盘线<Caret $size={4} /></ToolButton>
              <ToolButton $pad={7}>画线</ToolButton>
              <ToolButton $boxed>指数叠加<Caret $size={4} /></ToolButton>
              <ToolButton $pad={7}>日期定位</ToolButton>
              <ToolButton $boxed>
                <svg width="8" height="8" viewBox="0 0 8 8"><path d="M0 4H8M4 0V8" stroke="#ddd" strokeWidth="2" /></svg>
                自选<Caret $size={4} />
              </ToolButton>
              <CollapseButton aria-label="收起">
                <svg width="13" height="12" viewBox="0 0 13 12"><path d="M1 1L7 6L1 11M11 0V12" fill="none" stroke="#ddd" strokeWidth="2" /></svg>
              </CollapseButton>
            </ToolGroup>
          </Toolbar>

          <Head
            name="MAJAMES[自编]"
            params={[["5", "#fff"], ["10", "#00f060"], ["20", "#ff60ff"], ["30", "#f06060"], ["60", "#70f8f8"], ["120", "#ffb878"], ["250", "#ffff40"]]}
            values={[
              ["MA1=10.158", "#fff", "up"], ["MA2=9.111", "#00f060", "up"], ["MA3=8.507", "#ff60ff", "up"], ["MA4=8.095", "#f06060", "up"], ["MA5=7.627", "#70f8f8", "up"],
              ["MA6=6.818", "#ffc080", "up"], ["MA7=6.475", "#ffff40", "up"], ["XG=0", "#c0c0c0"], ["灵动=0", "#c08040"], ["麒麟兽=0", "#800080"], ["VAR2=8.815", "#900000", "up"],
              ["VAR6=11.268", "#408080", "up"], ["VAR7=7.196", "#008000", "up"], ["成妖线=8.046", "#ff0000", "up"], ["SLXY=0", "#d0d0d0"], ["筹码=0", "#a00000"],
            ]}
          />
          <PricePlot />
          <Head
            name="VOL"
            params={[["120", "#ffff40"], ["30", "#ff60ff"], ["5", "#fff"]]}
            values={[["VOL=1817087", "#fff", "up"], ["MA1=202597", "#ffff40", "up"], ["MA2=380059", "#ff60ff", "up"], ["MA3=1125839", "#fff", "up"]]}
          />
          <VolumePlot />
          <Head name="超级资金" tools="full" values={[["超户=3.117", "#fff", "up"], ["累计=12.307", "#ff00ff", "up"], ["均值=6.029", "#fff", "up"], ["0", "#444"]]} />
          <SuperFundPlot />
          <Head name="净买占比[自编]" tools="full" values={[["比值=8.137", "#fff", "up"], ["2.5", "#ffff40"], ["0", "#ff60ff"], ["-2.5", "#e00000"], ["-5", "#00ffff"], ["-7.5", "#00f060"]]} />
          <NetBuyPlot />
          <Head
            name="资金博弈"
            tools="full"
            values={[["超级资金=12.307", "#ff00ff", "up"], ["大户资金=-6.17", "#ffa020", "down"], ["中户资金=-7.898", "#00ffff", "down"], ["散户资金=1.761", "#00ff00", "down"], ["0", "#444"]]}
          />
          <FundGamePlot />
          <Head
            name="龙行趋势线XZ[自编]"
            tools="short"
            values={[["多空=2.417", "#fff", "up"], ["上市空=0.278", "#00ff00", "up"], ["长多=60", "#ff00ff", "up"], ["长空=0", "#00ffff"], ["短多=81", "#ff0000", "up"], ["短空=0", "#00ff00"], ["买多=15", "#ffff00", "up"]]}
          />
          <TrendPlot />
          <Head name="1-游资暴涨[自编]" hot tools="short" values={[["开启暴涨=0", "#fff"]]} />
          <SignalPlot />
          <DatePlot />
        </Center>
        <QuoteStrip>
          <QuoteGroup $h={33}>
            <svg width="9" height="14" viewBox="0 0 9 14"><path d="M1 7L8 0V14Z" fill="#999" /></svg>
          </QuoteGroup>
          {quoteGroups.map((g, i) => (
            <QuoteGroup key={i} $h={g.h}>{[...g.text].map((c, k) => <span key={k}>{c}</span>)}</QuoteGroup>
          ))}
        </QuoteStrip>
      </Workspace>

      <Frame $x={88} $y={112} $w={239} $h={69} />
      <Frame $x={237} $y={423} $w={66} $h={41} />
      <Frame $x={343} $y={428} $w={76} $h={39} />
      <Frame $x={577} $y={440} $w={60} $h={41} />
      <Frame $x={783} $y={415} $w={52} $h={58} />
      <Frame $x={852} $y={433} $w={27} $h={25} />
      <Frame $x={88} $y={709} $w={85} $h={52} />
      <Frame $x={88} $y={877} $w={104} $h={51} />
      <Badge $x={325} $y={150}>1</Badge>
      <Badge $x={808} $y={471}>2</Badge>
      <Badge $x={797} $y={556}>3</Badge>
      <Badge $x={784} $y={728}>4</Badge>
      <Note $x={354} $y={143}>MA概念 行业</Note>
      <Note $x={837} $y={465}>{"黄色☆：地量小阳\n绿色☆：筹码集中"}</Note>
      <Note $x={826} $y={550}>{"涨停基因\n麒麟尾买\n灵动T+1\n起爆点\n成妖线"}</Note>
      <Note $x={813} $y={722}>{"净买占比\n游资入场 暴涨"}</Note>

      <DataCard>
        <dl>
          {card.map(([k, v, c]) => (
            <div key={k}>
              <CardLabel $latin={k === "TTMPE"}>{k}</CardLabel>
              <CardValue $c={c}>{v}</CardValue>
            </div>
          ))}
        </dl>
        <CardClose aria-label="关闭">
          <svg width="14" height="14" viewBox="0 0 14 14"><circle cx="7" cy="7" r="6" fill="#555" stroke="#ccc" /><path d="M4 4L10 10M10 4L4 10" stroke="#fff" strokeWidth="2" /></svg>
        </CardClose>
      </DataCard>
    </Page>
  );
}
